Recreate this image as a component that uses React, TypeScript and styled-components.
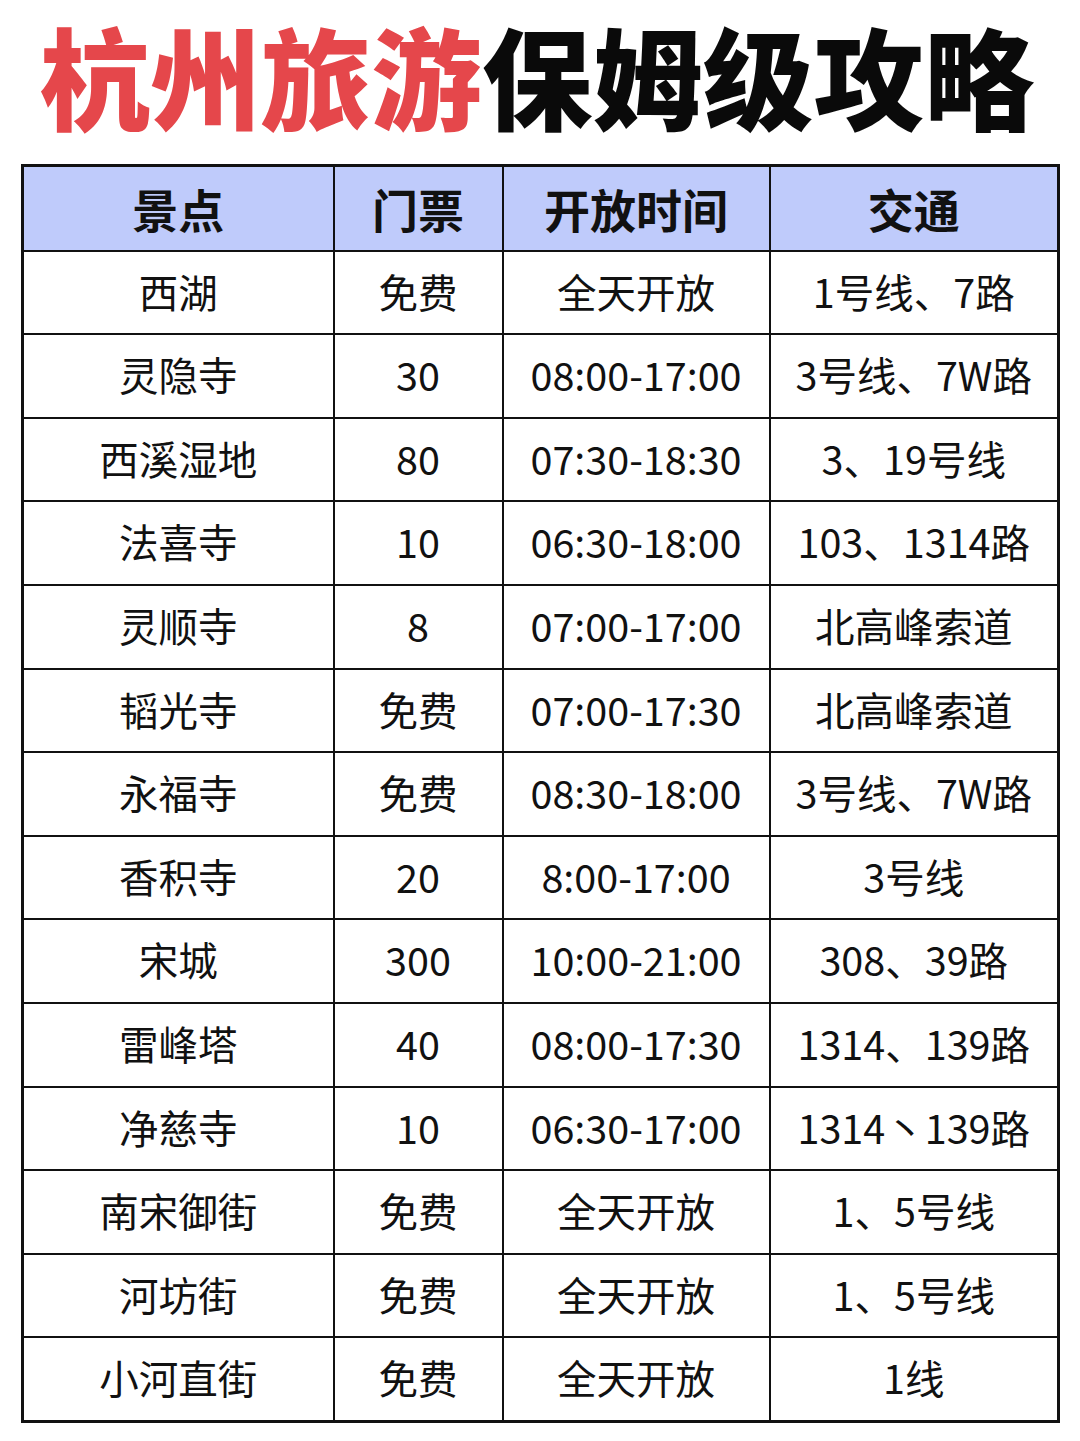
import { styled, createGlobalStyle } from 'styled-components';

const rows: [string, string, string, string][] = [
  ['西湖', '免费', '全天开放', '1号线、7路'],
  ['灵隐寺', '30', '08:00-17:00', '3号线、7W路'],
  ['西溪湿地', '80', '07:30-18:30', '3、19号线'],
  ['法喜寺', '10', '06:30-18:00', '103、1314路'],
  ['灵顺寺', '8', '07:00-17:00', '北高峰索道'],
  ['韬光寺', '免费', '07:00-17:30', '北高峰索道'],
  ['永福寺', '免费', '08:30-18:00', '3号线、7W路'],
  ['香积寺', '20', '8:00-17:00', '3号线'],
  ['宋城', '300', '10:00-21:00', '308、39路'],
  ['雷峰塔', '40', '08:00-17:30', '1314、139路'],
  ['净慈寺', '10', '06:30-17:00', '1314丶139路'],
  ['南宋御街', '免费', '全天开放', '1、5号线'],
  ['河坊街', '免费', '全天开放', '1、5号线'],
  ['小河直街', '免费', '全天开放', '1线'],
];

const headers = ['景点', '门票', '开放时间', '交通'];
const widths = [311, 169, 267, 289];

export default function App() {
  return (
    <>
      <GlobalStyle />
      <Page>
        <Title>
          <Red>杭州旅游</Red>保姆级攻略
        </Title>
        <Table>
          <colgroup>
            {widths.map((w, i) => (
              <col key={i} style={{ width: `${w}px` }} />
            ))}
          </colgroup>
          <thead>
            <tr>
              {headers.map(h => (
                <Th key={h}>{h}</Th>
              ))}
            </tr>
          </thead>
          <tbody>
            {rows.map(r => (
              <tr key={r[0]}>
                {r.map((c, i) => (
                  <Td key={i}>{c}</Td>
                ))}
              </tr>
            ))}
          </tbody>
        </Table>
      </Page>
    </>
  );
}

const GlobalStyle = createGlobalStyle`
  body {
    margin: 0;
    background: #fff;
    font-family: 'Noto Sans CJK SC', 'Noto Sans', sans-serif;
    color: #111;
  }
`;

const Page = styled.div`
  width: 1080px;
  min-height: 1441px;
  padding-top: 8px;
  box-sizing: border-box;
`;

const Title = styled.h1`
  margin: 0 0 23px;
  padding-right: 6px;
  font-size: 110.5px;
  font-weight: 900;
  line-height: 1.2;
  text-align: center;
  color: #0a0a0a;
`;

const Red = styled.span`
  color: #e5474b;
`;

const Table = styled.table`
  margin-left: 21px;
  border-collapse: collapse;
  table-layout: fixed;
  width: 1037px;
  border: 3px solid #111;
`;

const Th = styled.th`
  height: 83px;
  padding: 0;
  background: #bfcbfb;
  border: 2.5px solid #111;
  font-size: 46px;
  font-weight: 700;
  text-align: center;
`;

const Td = styled.td`
  height: 77.6px;
  padding: 0 0 4px;
  border: 2.5px solid #111;
  font-size: 39.5px;
  font-weight: 400;
  text-align: center;
  line-height: 1;
`;
